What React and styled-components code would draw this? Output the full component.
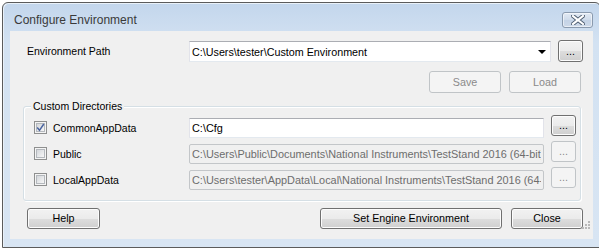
import React from "react";
import styled, { createGlobalStyle, css } from "styled-components";

const Global = createGlobalStyle`
  html, body { margin: 0; padding: 0; background: #ffffff; overflow: hidden; }
  body { width: 599px; height: 251px; font-family: "Liberation Sans", Arial, sans-serif; }
  * { box-sizing: border-box; }
`;

const Window = styled.div`
  margin: 2px 0 0 2px;
  width: 599px;
  height: 246px;
  border: 1px solid #5b5b5b;
  border-radius: 6px 6px 0 0;
  background: linear-gradient(#c3d6ec, #d3e2f2 40px, #d8e5f3);
  display: flex;
  flex-direction: column;
  box-shadow: inset 1px 1px 0 #e9f1f9;
`;

const TitleBar = styled.div`
  height: 28px;
  flex: none;
  display: flex;
  align-items: flex-start;
  justify-content: space-between;
  padding: 0 7px 0 11px;
`;

const Title = styled.div`
  font-family: "Liberation Sans", Arial, sans-serif;
  font-size: 12px;
  color: #3a3a3a;
  line-height: 14px;
  margin-top: 10px;
`;

const CloseButton = styled.div`
  width: 31px;
  height: 16px;
  margin-top: 9px;
  border: 1px solid #8a9aae;
  border-radius: 3px;
  background: linear-gradient(#e2eaf4, #cfdbea 50%, #c4d3e6 51%, #cdd9e9);
  box-shadow: inset 0 0 0 1px rgba(255,255,255,0.55);
  display: flex;
  align-items: center;
  justify-content: center;
`;

const Client = styled.div`
  position: relative;
  margin: 0 7px;
  width: 583px;
  height: 208px;
  background: #f0f0f0;
  display: flex;
  flex-direction: column;
  font-size: 10.5px;
`;

const PathRow = styled.div`
  display: flex;
  align-items: center;
  height: 22px;
  margin-top: 9px;
  padding-left: 17px;
`;

const Label = styled.div`
  font-size: 10.5px;
  color: #000;
  white-space: nowrap;
  width: ${(p) => p.$w}px;
  flex: none;
`;

const Combo = styled.div`
  width: 362px;
  height: 21px;
  margin-top: 1px;
  background: #fff;
  border: 1px solid #e2e3ea;
  border-top-color: #abadb3;
  border-bottom-color: #e3e9ef;
  display: flex;
  align-items: center;
  justify-content: space-between;
  padding: 0 4px 0 2px;
  font-size: 10.75px;
  color: #000;
`;

const Arrow = styled.span`
  width: 0;
  height: 0;
  border-left: 4px solid transparent;
  border-right: 4px solid transparent;
  border-top: 4px solid #000;
  margin-top: 1px;
`;

const Button = styled.button`
  font-family: "Liberation Sans", Arial, sans-serif;
  font-size: 10.75px;
  width: ${(p) => p.$w}px;
  height: ${(p) => p.$h || 21}px;
  flex: none;
  padding: 0;
  border-radius: 3px;
  border: 1px solid #707070;
  color: #000;
  background: linear-gradient(#f2f2f2, #ebebeb 50%, #dddddd 51%, #cfcfcf);
  box-shadow: inset 0 0 0 1px #fcfcfc;
  display: flex;
  align-items: ${(p) => (p.$dots ? "flex-end" : "center")};
  justify-content: center;
  line-height: 13px;
  padding-bottom: ${(p) => (p.$dots ? "3px" : "0")};
  ${(p) =>
    p.disabled &&
    css`
      border-color: #c0c4c7;
      background: #f4f4f4;
      box-shadow: none;
      color: #8a8a8a;
    `}
`;

const ActionRow = styled.div`
  display: flex;
  justify-content: flex-end;
  gap: 8px;
  margin-top: 9px;
  padding-right: 12px;
`;

const Group = styled.div`
  position: relative;
  margin: 13px 12px 0 13px;
  border: 1px solid #d5dfe5;
  border-radius: 3px;
  box-shadow: inset 1px 1px 0 #fff, 1px 1px 0 #fff;
  padding: 11px 5px 10px 10px;
  display: flex;
  flex-direction: column;
  gap: 6px;
`;

const Legend = styled.div`
  position: absolute;
  left: 7px;
  top: -8px;
  padding: 0 2px;
  background: #f0f0f0;
  font-size: 10.5px;
  line-height: 14px;
  color: #000;
`;

const DirRow = styled.div`
  display: flex;
  align-items: flex-start;
  height: 20px;
`;

const CheckLabel = styled.label`
  width: 155px;
  flex: none;
  display: flex;
  align-items: center;
  gap: 6px;
  height: 20px;
  font-size: 10.5px;
  color: #000;
`;

const Box = styled.span`
  width: 13px;
  height: 13px;
  flex: none;
  margin-top: -1px;
  border: 1px solid #8e8f8f;
  background: #f4f4f4;
  position: relative;
  display: flex;
  align-items: center;
  justify-content: center;
  &::before {
    content: "";
    position: absolute;
    inset: 1px;
    border: 1px solid #b4b8bd;
    background: linear-gradient(135deg, #d3d6da, #f7f7f7);
  }
  svg { position: relative; }
`;

const Field = styled.input`
  width: 355px;
  height: 20px;
  flex: none;
  padding: 0 2px;
  font-family: "Liberation Sans", Arial, sans-serif;
  font-size: 10.9px;
  color: #000;
  background: #fff;
  border: 1px solid #e2e3ea;
  border-top-color: #abadb3;
  border-bottom-color: #e3e9ef;
  outline: none;
  &:disabled {
    color: #6d6d6d;
    background: #f0f0f0;
    border: 1px solid #c3c6c9;
    border-radius: 2px;
  }
`;

const BrowseSlot = styled.div`
  margin: -3px 0 0 7px;
`;

const PathBrowse = styled.div`
  margin-left: 7px;
`;

const Footer = styled.div`
  display: flex;
  align-items: center;
  margin-top: 7px;
  padding: 0 10px 0 17px;
`;

const Spacer = styled.div`
  flex: 1;
`;

const FooterRight = styled.div`
  display: flex;
  gap: 9px;
`;

const Grip = styled.svg`
  position: absolute;
  right: 3px;
  bottom: 10px;
`;

const CheckMark = () => (
  <svg width="9" height="9" viewBox="0 0 9 9">
    <path d="M1.2 4.6 L3.5 7.3 L7.8 1" fill="none" stroke="#4a64a0" strokeWidth="1.5" />
  </svg>
);

const dirs = [
  { name: "CommonAppData", value: "C:\\Cfg", checked: true },
  { name: "Public", value: "C:\\Users\\Public\\Documents\\National Instruments\\TestStand 2016 (64-bit)", checked: false },
  { name: "LocalAppData", value: "C:\\Users\\tester\\AppData\\Local\\National Instruments\\TestStand 2016 (64-bit)", checked: false },
];

export default function App() {
  return (
    <>
      <Global />
      <Window>
        <TitleBar>
          <Title>Configure Environment</Title>
          <CloseButton>
            <svg width="14" height="10" viewBox="0 0 14 10">
              <path d="M2 1 L12 9 M12 1 L2 9" stroke="#4c5c70" strokeWidth="4" strokeLinecap="square" />
              <path d="M2 1 L12 9 M12 1 L2 9" stroke="#ffffff" strokeWidth="2.2" strokeLinecap="square" />
            </svg>
          </CloseButton>
        </TitleBar>
        <Client>
          <PathRow>
            <Label $w={162}>Environment Path</Label>
            <Combo>
              <span>C:\Users\tester\Custom Environment</span>
              <Arrow />
            </Combo>
            <PathBrowse>
              <Button $w={25} $h={22} $dots>...</Button>
            </PathBrowse>
          </PathRow>
          <ActionRow>
            <Button $w={72} $h={22} disabled>Save</Button>
            <Button $w={72} $h={22} disabled>Load</Button>
          </ActionRow>
          <Group>
            <Legend>Custom Directories</Legend>
            {dirs.map((d) => (
              <DirRow key={d.name}>
                <CheckLabel>
                  <Box>{d.checked && <CheckMark />}</Box>
                  {d.name}
                </CheckLabel>
                <Field defaultValue={d.value} disabled={!d.checked} readOnly />
                <BrowseSlot>
                  <Button $w={25} $h={21} $dots disabled={!d.checked}>...</Button>
                </BrowseSlot>
              </DirRow>
            ))}
          </Group>
          <Footer>
            <Button $w={73}>Help</Button>
            <Spacer />
            <FooterRight>
              <Button $w={182}>Set Engine Environment</Button>
              <Button $w={72}>Close</Button>
            </FooterRight>
          </Footer>
          <Grip width="8" height="8" viewBox="0 0 8 8">
            {[[6, 0], [6, 3], [3, 3], [6, 6], [3, 6], [0, 6]].map(([x, y]) => (
              <rect key={`${x}-${y}`} x={x} y={y} width="2" height="2" fill="#b8b8b8" />
            ))}
          </Grip>
        </Client>
      </Window>
    </>
  );
}
